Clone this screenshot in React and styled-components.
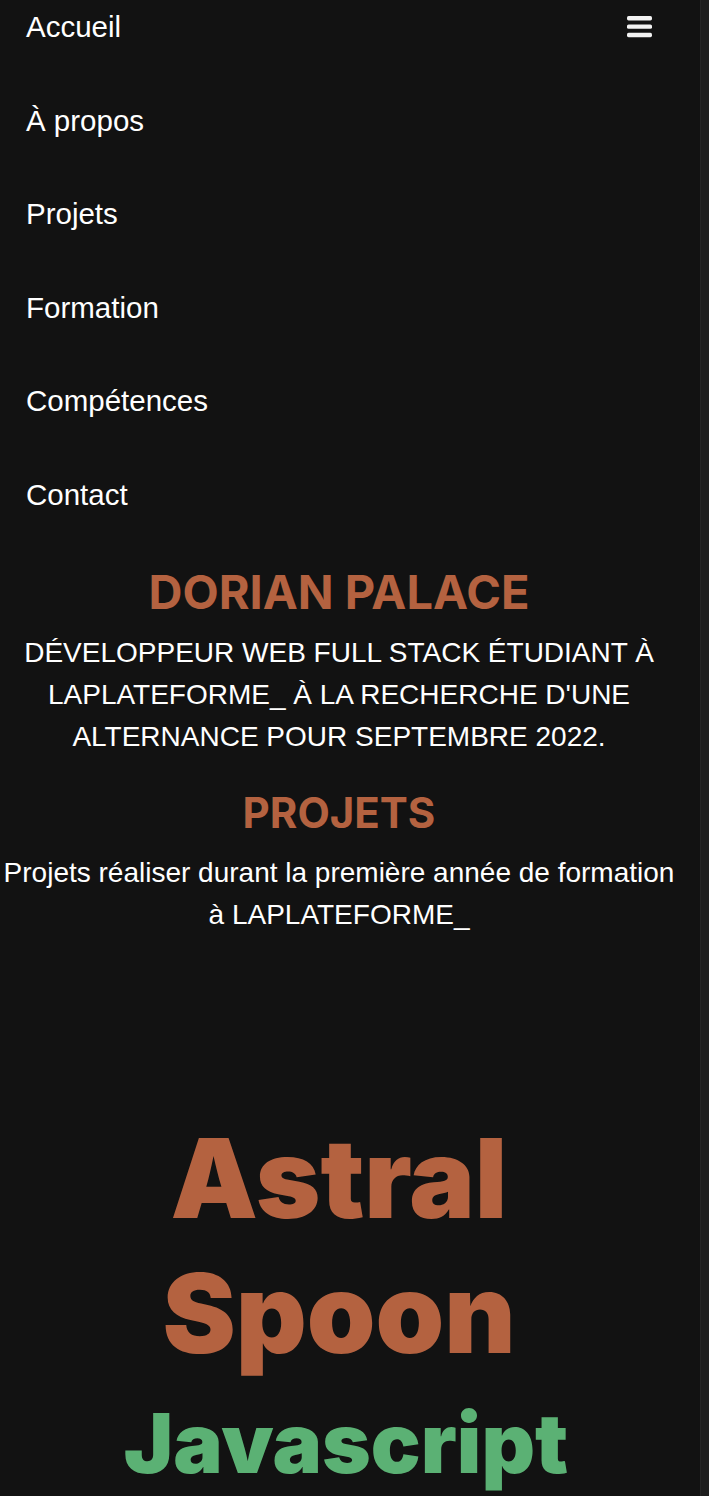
import React from "react";
import styled, { createGlobalStyle } from "styled-components";

const GlobalStyle = createGlobalStyle`
  html, body {
    margin: 0;
    padding: 0;
    background-color: #121212;
  }
  body {
    font-family: "Liberation Sans", Arial, sans-serif;
    color: #ffffff;
  }
`;

const links = ["Accueil", "À propos", "Projets", "Formation", "Compétences", "Contact"];

const MenuIcon = () => (
  <svg width="25" height="22" viewBox="0 0 25 22" fill="#f2f2f2">
    <rect x="0" y="0" width="25" height="4.4" rx="1.6" />
    <rect x="0" y="8.4" width="25" height="4.4" rx="1.6" />
    <rect x="0" y="16.8" width="25" height="4.4" rx="1.6" />
  </svg>
);

const App = () => {
  return (
    <>
      <GlobalStyle />
      <Frame>
        <Main>
          <Header>
            <NavList>
              {links.map((link) => (
                <NavLink key={link} href="#">
                  {link}
                </NavLink>
              ))}
            </NavList>
            <MenuButton aria-label="menu">
              <MenuIcon />
            </MenuButton>
          </Header>

          <Hero>
            <Name>DORIAN PALACE</Name>
            <Tagline>
              Développeur web full stack étudiant à LAPLATEFORME_ à la recherche
              d'une alternance pour septembre 2022.
            </Tagline>
          </Hero>

          <Section>
            <SectionTitle>PROJETS</SectionTitle>
            <SectionText>
              Projets réaliser durant la première année de formation à
              LAPLATEFORME_
            </SectionText>
          </Section>

          <Project>
            <ProjectName>Astral Spoon</ProjectName>
            <ProjectTech>Javascript</ProjectTech>
          </Project>
        </Main>
        <Gutter />
      </Frame>
    </>
  );
};

const Frame = styled.div`
  display: flex;
  min-height: 1496px;
  background-color: #121212;
`;

const Main = styled.main`
  width: 678px;
  flex-shrink: 0;
`;

const Gutter = styled.div`
  margin-left: auto;
  width: 8px;
  background-color: #1e1e1e;
  border-left: 1px solid #262626;
`;

const Header = styled.header`
  display: flex;
  justify-content: space-between;
  align-items: flex-start;
  padding: 10px 26px 0 26px;
`;

const NavList = styled.nav`
  display: flex;
  flex-direction: column;
  gap: 59.6px;
`;

const NavLink = styled.a`
  font-size: 29.5px;
  line-height: 34px;
  color: #ffffff;
  text-decoration: none;
`;

const MenuButton = styled.button`
  background: none;
  border: none;
  padding: 0;
  margin-top: 6px;
  cursor: pointer;
  display: flex;
`;

const Hero = styled.section`
  margin-top: 52px;
  padding: 0 20px;
  text-align: center;
`;

const Name = styled.h1`
  margin: 0;
  font-family: Inter, "Liberation Sans", sans-serif;
  font-weight: 700;
  font-size: 47px;
  line-height: 55px;
  color: #b46240;
`;

const Tagline = styled.p`
  margin: 13.5px 0 0 0;
  font-size: 28px;
  line-height: 42px;
  text-transform: uppercase;
`;

const Section = styled.section`
  margin-top: 30px;
  text-align: center;
`;

const SectionTitle = styled.h2`
  margin: 0;
  font-family: Inter, "Liberation Sans", sans-serif;
  font-weight: 700;
  font-size: 42px;
  line-height: 50px;
  color: #b46240;
`;

const SectionText = styled.p`
  margin: 14px 0 0 0;
  font-size: 28px;
  line-height: 42px;
`;

const Project = styled.article`
  margin-top: 175px;
  text-align: center;
`;

const ProjectName = styled.h3`
  margin: 0 auto;
  width: 420px;
  font-family: Inter, "Liberation Sans", sans-serif;
  font-weight: 900;
  font-size: 110px;
  line-height: 135px;
  color: #b46240;
`;

const ProjectTech = styled.p`
  margin: 12px 0 0 0;
  padding-left: 14px;
  font-family: Inter, "Liberation Sans", sans-serif;
  font-weight: 900;
  font-size: 83px;
  line-height: 100px;
  color: #5bb174;
`;

export default App;
